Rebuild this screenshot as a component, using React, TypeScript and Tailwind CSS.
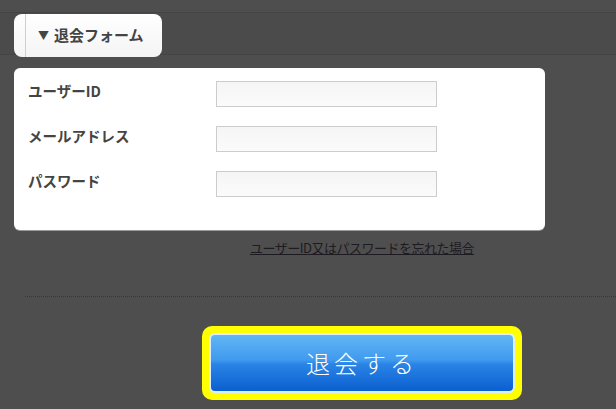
import { useState } from 'react';

const font = { fontFamily: '"Noto Sans CJK JP", "Noto Sans", sans-serif' };

function Field({ label, type = 'text' }: { label: string; type?: string }) {
  const [value, setValue] = useState('');
  return (
    <div className="flex items-start">
      <label className="w-[188px] pt-px text-[14.5px] font-bold leading-[18px] text-[#444]">{label}</label>
      <input
        type={type}
        value={value}
        onChange={(e) => setValue(e.target.value)}
        className="h-[26px] w-[221px] border border-[#cccccc] bg-[linear-gradient(#f5f5f5,#fbfbfb)] px-1 text-[13px] outline-none"
      />
    </div>
  );
}

export default function App() {
  return (
    <div className="flex h-[409px] w-[616px] flex-col overflow-hidden bg-[#4e4e4e]" style={font}>
      {/* Tab strip */}
      <div className="mt-[12px] flex h-[43px] border-y border-[#444444] bg-[#4b4b4b]">
        <div className="ml-[14px] mt-px flex h-[43px] w-[148px] items-stretch rounded-lg bg-[linear-gradient(#ffffff,#f4f4f4)]">
          <div className="ml-[11px] flex items-center border-l border-[#cfcfcf] pl-[12px] text-[15px] font-bold text-[#444]">
            <span className="mr-[5px] text-[11px]">▼</span>退会フォーム
          </div>
        </div>
      </div>

      {/* Form card */}
      <div className="ml-[14px] mt-[13px] flex h-[162px] w-[531px] flex-col gap-[19px] rounded-md bg-white pl-[14px] pt-[13px] shadow-[0_1px_0_#9a9a9a]">
        <Field label="ユーザーID" />
        <Field label="メールアドレス" />
        <Field label="パスワード" type="password" />
      </div>

      {/* Forgot link */}
      <div className="mt-[10px] flex justify-center pl-[108px]">
        <a href="#" className="text-[13px] leading-[16px] tracking-[-0.5px] text-[#1e1a22] underline">
          ユーザーID又はパスワードを忘れた場合
        </a>
      </div>

      {/* Divider */}
      <div className="ml-[25px] mt-[40px] border-t border-dotted border-[#383838]" />

      {/* Submit */}
      <div className="mt-[29px] flex justify-center pl-[108px]">
        <div className="h-[74px] w-[320px] rounded-[10px] bg-[#ffff00] p-[7px]">
          <button className="flex h-full w-full items-center justify-center rounded-[6px] border-2 border-[#dceeff] bg-[linear-gradient(#62b6f5_0%,#3f9aee_45%,#2a84e6_52%,#0b5fd0_100%)] text-[24px] font-light tracking-[4px] text-white">
            退会する
          </button>
        </div>
      </div>
    </div>
  );
}
